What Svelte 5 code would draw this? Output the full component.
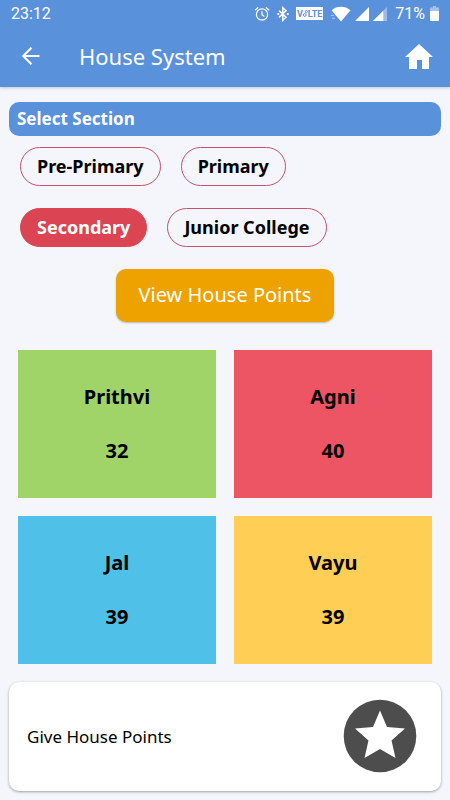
<script>
  let sections = ['Pre-Primary', 'Primary', 'Secondary', 'Junior College'];
  let selected = 'Secondary';

  let houses = [
    { name: 'Prithvi', points: 32, color: '#a0d468' },
    { name: 'Agni', points: 40, color: '#ed5565' },
    { name: 'Jal', points: 39, color: '#4fc0e8' },
    { name: 'Vayu', points: 39, color: '#ffce54' }
  ];
</script>

<header>
  <div class="status">
    <span class="time">23:12</span>
    <svg class="alarm" width="16" height="16" viewBox="0 0 16 16" fill="none" stroke="#fff">
      <circle cx="8" cy="8.5" r="5.6" stroke-width="1.2" />
      <path d="M8 5.2v3.6l2.4 1.6M1 4.2l3.2-2.8M15 4.2l-3.2-2.8" stroke-width="1.2" />
    </svg>
    <svg class="bluetooth" width="12" height="16" viewBox="0 0 12 16" fill="none" stroke="#fff">
      <path d="M2 4.6l7 6.6-3.2 3V1.8l3.2 3-7 6.6" stroke-width="1.5" />
      <path d="M.4 8h1.8M9.8 8h1.8" stroke-width="1.8" />
    </svg>
    <span class="volte">V<svg width="5" height="9" viewBox="0 0 5 9" fill="none" stroke="#5a91db"><circle cx="1.8" cy="6" r="1.4" /><circle cx="3.4" cy="2.6" r="1.1" /></svg>LTE</span>
    <svg class="wifi" width="20" height="16" viewBox="0 0 20 16">
      <path d="M.5 4.2C6-.4 14-.4 19.5 4.2L10 15.5z" fill="#fff" />
      <path d="M0 9.4h3M1 12.2h3" stroke="#fff" stroke-opacity=".5" />
    </svg>
    <svg class="signal" width="14" height="14" viewBox="0 0 15 15">
      <path d="M15 0v15H0z" fill="#fff" />
    </svg>
    <svg class="signal" width="14" height="14" viewBox="0 0 15 15">
      <path d="M15 0v15H0z" fill="#fff" fill-opacity=".4" />
      <path d="M11 4v11H0z" fill="#fff" />
    </svg>
    <span class="percent">71%</span>
    <svg class="battery" width="9" height="15" viewBox="0 0 9 15">
      <path d="M3 0h3v1.5h3V5H0V1.5h3z" fill="#fff" fill-opacity=".45" />
      <path d="M0 5h9v9a1 1 0 0 1-1 1H1a1 1 0 0 1-1-1z" fill="#fff" />
    </svg>
  </div>
  <nav>
    <button class="icon" aria-label="Back">
      <svg width="20" height="20" viewBox="0 0 20 20" fill="none" stroke="#fff" stroke-width="2">
        <path d="M18.500 10H2.5M10.5 1.8L2.2 10l8.3 8.2" />
      </svg>
    </button>
    <h1>House System</h1>
    <a class="icon" href="#home" aria-label="Home">
      <svg width="28" height="25" viewBox="0 0 28 25">
        <path d="M14 0l14 13h-4v12h-7v-9h-5v9H4V13H0z" fill="#fff" />
      </svg>
    </a>
  </nav>
</header>

<main>
  <h2>Select Section</h2>

  <div class="chips">
    {#each sections as section}
      <button
        class="chip"
        class:active={section === selected}
        aria-pressed={section === selected}
        on:click={() => (selected = section)}>{section}</button>
    {/each}
  </div>

  <button class="view">View House Points</button>

  <div class="houses">
    {#each houses as house}
      <div class="house" style="background: {house.color}">
        <h3>{house.name}</h3>
        <p>{house.points}</p>
      </div>
    {/each}
  </div>

  <a class="give" href="#give">
    <span>Give House Points</span>
    <svg width="74" height="74" viewBox="0 0 74 74">
      <circle cx="37" cy="37" r="36.3" fill="#4d4d4d" />
      <path d="M37 11.500l7 16.500 18 1.500-13.500 12 4 17.500L37 50l-15.500 9 4-17.500L12 29.500 30 28z" fill="#fff" />
    </svg>
  </a>
</main>

<style>
  :global(body) {
    margin: 0;
    background: #f5f6fb;
    color: #000;
    font-family: 'Noto Sans', 'Open Sans', sans-serif;
  }

  h1, h2, h3, p {
    margin: 0;
  }

  button {
    font-family: inherit;
    cursor: pointer;
  }

  a {
    color: inherit;
    text-decoration: none;
  }

  svg {
    display: block;
    flex: none;
  }

  header {
    background: #5a91db;
    color: #fff;
    box-shadow: 0 1px 3px rgba(0, 0, 0, 0.2);
  }

  .status {
    display: flex;
    align-items: center;
    height: 27px;
    padding: 0 11px;
    font-family: Roboto, sans-serif;
    font-size: 16px;
  }

  .time {
    margin-right: auto;
  }

  .bluetooth {
    margin-left: 7px;
  }

  .volte {
    display: flex;
    align-items: center;
    height: 13px;
    margin-left: 7px;
    padding: 0 1px;
    background: #fff;
    color: #5a91db;
    font-size: 9px;
    font-weight: 700;
  }

  .wifi {
    margin-left: 8px;
  }

  .signal {
    margin-left: 4px;
  }

  .percent {
    margin-left: 8px;
  }

  .battery {
    margin-left: 5px;
  }

  nav {
    display: flex;
    align-items: center;
    height: 58px;
    padding: 0 17px 2px 21px;
  }

  .icon {
    padding: 0;
    border: 0;
    background: none;
  }

  h1 {
    flex: 1;
    margin-left: 38px;
    font-size: 22px;
    font-weight: 400;
    line-height: 32px;
  }

  main {
    padding: 15px 9px 9px;
  }

  h2 {
    padding: 0 8px;
    border-radius: 10px;
    background: #5a91db;
    color: #fff;
    font-size: 17px;
    line-height: 34px;
  }

  .chips {
    display: flex;
    flex-wrap: wrap;
    gap: 22px 20px;
    padding: 11px;
  }

  .chip {
    height: 39px;
    padding: 0 16px 2px;
    border: 1px solid #c8506a;
    border-radius: 20px;
    background: transparent;
    color: #000;
    font-size: 18px;
    font-weight: 700;
  }

  .chip.active {
    border-color: #da4453;
    background: #da4453;
    color: #fff;
  }

  .view {
    display: block;
    height: 53px;
    margin: 11px auto 28px;
    padding: 0 23px 2px;
    border: 0;
    border-radius: 10px;
    background: #eda200;
    color: #fff;
    font-size: 20px;
    box-shadow: 0 1px 2px rgba(0, 0, 0, 0.25);
  }

  .houses {
    display: grid;
    grid-template-columns: 1fr 1fr;
    gap: 18px;
    padding: 0 9px;
  }

  .house {
    display: flex;
    flex-direction: column;
    gap: 26px;
    padding: 33px 0;
    text-align: center;
    font-size: 20px;
    font-weight: 700;
    line-height: 28px;
  }

  h3 {
    font-size: 20px;
  }

  .give {
    display: flex;
    align-items: center;
    justify-content: space-between;
    margin-top: 18px;
    padding: 17px 24px 18px 18px;
    border-radius: 10px;
    background: #fff;
    font-size: 17px;
    box-shadow: 0 1px 3px rgba(0, 0, 0, 0.35);
  }
</style>
